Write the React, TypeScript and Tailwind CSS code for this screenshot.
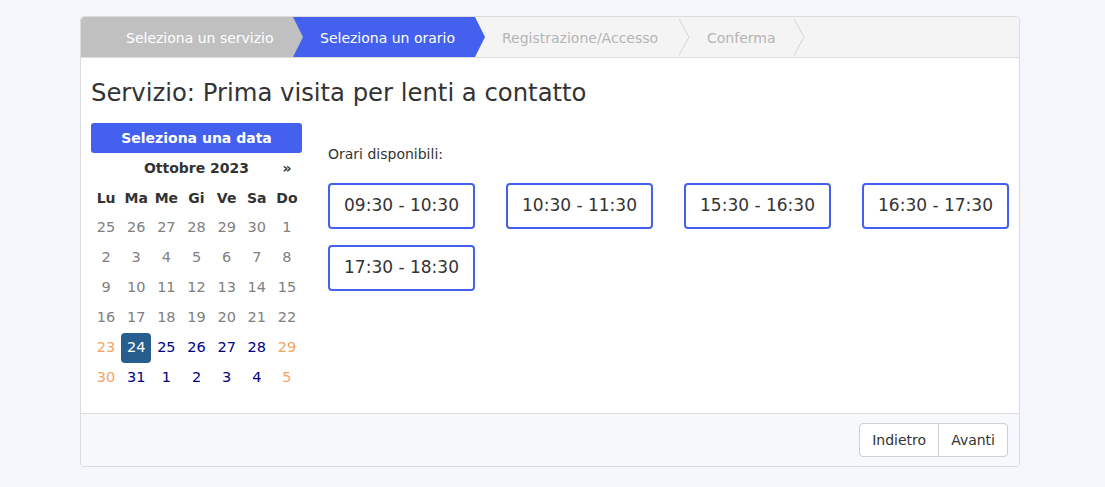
import React from "react";

const steps = [
  { label: "Seleziona un servizio", width: "w-[212px]", pad: "pl-[45px]", kind: "done" },
  { label: "Seleziona un orario", width: "w-[182px]", pad: "pl-[27px]", kind: "active" },
  { label: "Registrazione/Accesso", width: "w-[204px]", pad: "pl-[27px]", kind: "todo" },
  { label: "Conferma", width: "w-[115px]", pad: "pl-[28px]", kind: "todo" },
];

const weeks: { d: number; t: "past" | "cur" | "we" | "sel" }[][] = [
  [25, 26, 27, 28, 29, 30, 1].map((d) => ({ d, t: "past" as const })),
  [2, 3, 4, 5, 6, 7, 8].map((d) => ({ d, t: "past" as const })),
  [9, 10, 11, 12, 13, 14, 15].map((d) => ({ d, t: "past" as const })),
  [16, 17, 18, 19, 20, 21, 22].map((d) => ({ d, t: "past" as const })),
  [
    { d: 23, t: "we" },
    { d: 24, t: "sel" },
    { d: 25, t: "cur" },
    { d: 26, t: "cur" },
    { d: 27, t: "cur" },
    { d: 28, t: "cur" },
    { d: 29, t: "we" },
  ],
  [
    { d: 30, t: "we" },
    { d: 31, t: "cur" },
    { d: 1, t: "cur" },
    { d: 2, t: "cur" },
    { d: 3, t: "cur" },
    { d: 4, t: "cur" },
    { d: 5, t: "we" },
  ],
];

const dayColor = {
  past: "text-[#808080]",
  cur: "text-[#000080]",
  we: "text-[#f4a460]",
  sel: "text-white",
};

const slots = ["09:30 - 10:30", "10:30 - 11:30", "15:30 - 16:30", "16:30 - 17:30", "17:30 - 18:30"];

const StepBar = () => (
  <div className="flex h-[41px] bg-[#f4f4f4] border-b border-[#dcdcdc] rounded-t-[4px]">
    {steps.map((s, i) => {
      const bg = s.kind === "done" ? "bg-[#c0c0c0]" : s.kind === "active" ? "bg-[#4361ee]" : "";
      const fg = s.kind === "todo" ? "text-[#b4b4b4]" : "text-white";
      return (
        <div
          key={s.label}
          className={`relative flex items-center ${s.width} ${s.pad} ${bg} ${fg} text-[14px] ${i === 0 ? "rounded-tl-[4px]" : ""}`}
        >
          <span className="whitespace-nowrap mt-[2px]">{s.label}</span>
          <svg className="absolute left-full top-0 z-10" width="12" height="40" viewBox="0 0 12 40">
            {s.kind === "done" && <polygon points="0,0 10,20 0,40" fill="#c0c0c0" />}
            {s.kind === "active" && <polygon points="0,0 10,20 0,40" fill="#4361ee" />}
            {s.kind === "todo" && (
              <polyline points="-1,0 10,20 -1,40" fill="none" stroke="#d4d4d4" strokeWidth="1" />
            )}
          </svg>
        </div>
      );
    })}
  </div>
);

const Calendar = () => (
  <div className="w-[211px]">
    <button className="w-full h-[30px] bg-[#4361ee] text-white font-bold text-[14px] rounded-[3px]">
      Seleziona una data
    </button>
    <div className="grid grid-cols-7 h-[30px] items-center text-[14px] text-[#333] font-bold">
      <span />
      <span className="col-span-5 text-center">Ottobre 2023</span>
      <span className="text-center">»</span>
    </div>
    <div className="grid grid-cols-7 h-[30px] items-center text-[14px] text-[#333] font-bold">
      {["Lu", "Ma", "Me", "Gi", "Ve", "Sa", "Do"].map((d) => (
        <span key={d} className="text-center">
          {d}
        </span>
      ))}
    </div>
    {weeks.map((w, i) => (
      <div key={i} className="grid grid-cols-7 h-[30px] items-center text-[14.5px]">
        {w.map((c, j) => (
          <div key={j} className="flex justify-center">
            <span
              className={`${dayColor[c.t]} ${
                c.t === "sel" ? "bg-[#285e8e] rounded-[4px] w-[32px] h-[30px] flex items-center justify-center" : ""
              }`}
            >
              {c.d}
            </span>
          </div>
        ))}
      </div>
    ))}
  </div>
);

export default function App() {
  return (
    <div className="min-h-screen bg-[#f5f6fb] pt-[16px] pl-[80px] font-['DejaVu_Sans',Verdana,sans-serif]">
      <div className="w-[940px] bg-white border border-[#dcdcdc] rounded-[4px]">
        <StepBar />
        <div className="px-[10px] pt-[21px] pb-[20px]">
          <h1 className="text-[24.3px] leading-[28px] text-[#333]">Servizio: Prima visita per lenti a contatto</h1>
          <div className="flex mt-[16px] gap-[26px]">
            <Calendar />
            <div>
              <p className="mt-[21px] text-[14px] leading-[20px] text-[#333]">Orari disponibili:</p>
              <div className="grid grid-cols-4 gap-x-[31px] gap-y-[16px] mt-[19px]">
                {slots.map((s) => (
                  <button
                    key={s}
                    className="w-[147px] h-[46px] border-2 border-[#4361ee] rounded-[4px] text-[17px] text-[#333] bg-white"
                  >
                    {s}
                  </button>
                ))}
              </div>
            </div>
          </div>
        </div>
        <div className="border-t border-[#dcdcdc] bg-[#f7f8fb] h-[53px] flex items-center justify-end pr-[11px] rounded-b-[4px]">
          <div className="flex h-[34px] border border-[#cfcfcf] rounded-[4px] bg-white text-[14px] text-[#333]">
            <button className="px-[12px] border-r border-[#cfcfcf]">Indietro</button>
            <button className="px-[12px]">Avanti</button>
          </div>
        </div>
      </div>
    </div>
  );
}
